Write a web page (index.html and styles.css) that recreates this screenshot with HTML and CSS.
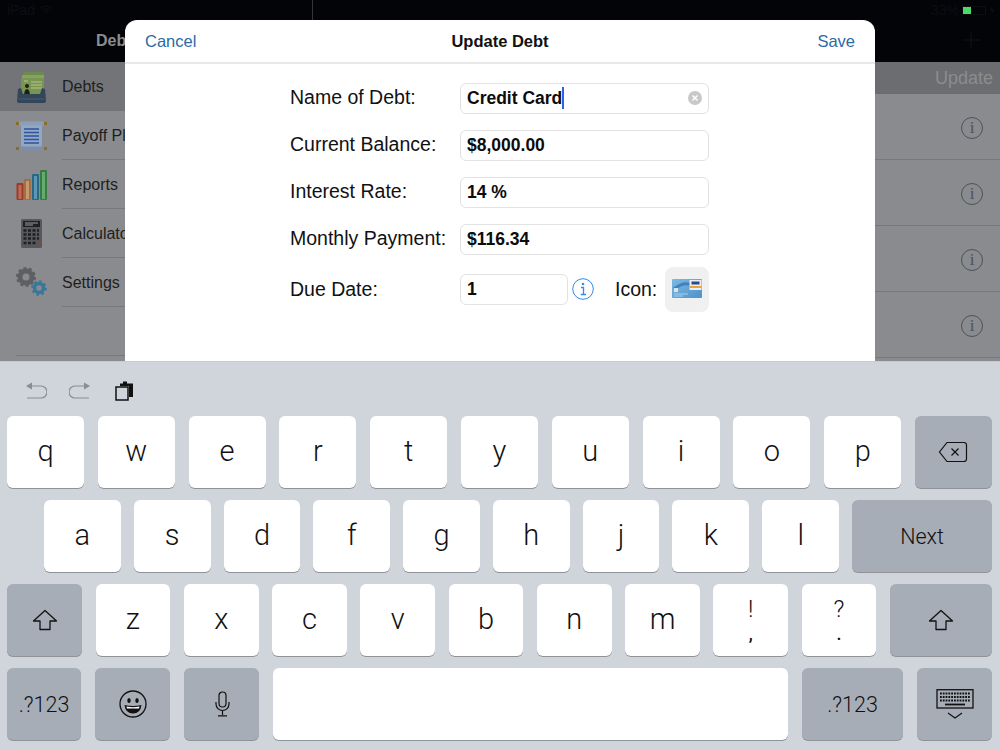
FILE: index.html
```html
<!DOCTYPE html>
<html lang="en">
<head>
<meta charset="utf-8">
<title>Update Debt</title>
<link rel="stylesheet" href="styles.css">
</head>
<body>
<div class="screen">
  <div class="app">
    <div class="topbar">
      <div class="status">
        <div class="status-left">
          <span>iPad</span>
          <svg class="wifi" viewBox="0 0 14 10"><path d="M1 3.500a8.500 8.500 0 0 1 12 0M3 5.600a5.600 5.600 0 0 1 8 0M5 7.600a2.800 2.800 0 0 1 4 0" fill="none" stroke="#0c0e12" stroke-width="1.200"/></svg>
        </div>
        <div class="status-divider"></div>
        <div class="status-right">
          <span>33%</span>
          <span class="battery"><span class="charge"></span></span>
          <svg class="bolt" viewBox="0 0 6 10"><path d="M3.500 0L0.500 5.500H3L2.500 10 5.500 4H3z" fill="#0c0e12"/></svg>
        </div>
      </div>
      <div class="navbar">
        <span class="nav-title">Debts</span>
        <svg class="plus" viewBox="0 0 18 18"><path d="M9 0v18M0 9h18" stroke="#101216" stroke-width="1"/></svg>
      </div>
    </div>
    <div class="columns">
      <nav class="sidebar">
        <div class="menu-row selected">
          <svg class="menu-icon" viewBox="0 0 31 32"><rect x="7" y="1" width="21" height="22" rx="1.500" fill="#6c8a4a"/><rect x="6" y="4" width="22" height="20" rx="1" fill="#86a262"/><rect x="5" y="7" width="23" height="18" rx="1" fill="#79954f"/><path d="M15 11h11M15 14h11M15 17h11M8 10h4" stroke="#b5c595" stroke-width="1.200"/><circle cx="11" cy="15" r="2" fill="#1c2018"/><path d="M8 24q.5-6 3-6t3 6z" fill="#1c2018"/><path d="M2 18l3-1 2 6h17l2-6 3 1 1 12a2 2 0 0 1-2 2H3a2 2 0 0 1-2-2z" fill="#334559"/><path d="M2.500 28h26" stroke="#4a5f78"/></svg>
          <span class="menu-label">Debts</span>
        </div>
        <div class="menu-row">
          <svg class="menu-icon" viewBox="0 0 31 32"><rect x="5" y="3" width="21" height="26" fill="#92a7c6"/><rect x="2.500" y="1.500" width="26" height="4" rx="1.500" fill="#8d9fb8"/><rect x="2.500" y="26.500" width="26" height="4" rx="1.500" fill="#7c8ea8"/><path d="M8 9h15M8 12.500h15M8 16h15M8 19.500h15M8 23h15" stroke="#30549a" stroke-width="1.300"/><rect x="0" y="2" width="3" height="3" fill="#8a6d2c"/><rect x="28" y="2" width="3" height="3" fill="#8a6d2c"/><rect x="0" y="27" width="3" height="3" fill="#8a6d2c"/><rect x="28" y="27" width="3" height="3" fill="#8a6d2c"/></svg>
          <span class="menu-label">Payoff Plan</span>
        </div>
        <div class="menu-row">
          <svg class="menu-icon" viewBox="0 0 31 32"><rect x="0.500" y="14" width="7" height="17" rx="1" fill="#9c3c28"/><rect x="2.500" y="16" width="3" height="14" fill="#bf6a55"/><rect x="8" y="10" width="7" height="21" rx="1" fill="#a06f45"/><rect x="10" y="12" width="3" height="18" fill="#c49a72"/><rect x="16" y="5" width="7" height="26" rx="1" fill="#2a6685"/><rect x="18" y="7" width="3" height="23" fill="#5f97b2"/><rect x="24" y="1" width="7" height="30" rx="1" fill="#377d43"/><rect x="26" y="3" width="3" height="27" fill="#67a96f"/></svg>
          <span class="menu-label">Reports</span>
        </div>
        <div class="menu-row">
          <svg class="menu-icon" viewBox="0 0 31 32"><rect x="5" y="1" width="21" height="29" rx="1.500" fill="#56585c"/><rect x="7" y="3" width="17" height="6" fill="#1f2022"/><path d="M9 5h13M9 7h8" stroke="#9a9c9e" stroke-width="1"/><path d="M7.500 12.500h3M12 12.500h3M16.500 12.500h3M21 12.500h2M7.500 16.500h3M12 16.500h3M16.500 16.500h3M21 16.500h2M7.500 20.500h3M12 20.500h3M16.500 20.500h3M21 20.500h2M7.500 25h3M12 25h3M16.500 25h3" stroke="#1e1f22" stroke-width="2.500"/><path d="M21 25h2" stroke="#a03a30" stroke-width="2.500"/></svg>
          <span class="menu-label">Calculator</span>
        </div>
        <div class="menu-row">
          <svg class="menu-icon" viewBox="0 0 31 32"><circle cx="10" cy="10" r="6" fill="none" stroke="#5d5f62" stroke-width="5"/><circle cx="10" cy="10" r="9" fill="none" stroke="#5d5f62" stroke-width="2" stroke-dasharray="3 2.650"/><circle cx="23" cy="21" r="4.500" fill="none" stroke="#37789a" stroke-width="3.500"/><circle cx="23" cy="21" r="6.800" fill="none" stroke="#37789a" stroke-width="2" stroke-dasharray="2.500 2.840"/></svg>
          <span class="menu-label">Settings</span>
        </div>
        <div class="menu-end"></div>
      </nav>
      <main class="list">
        <div class="list-head">Update</div>
        <div class="list-row"><span class="row-info">i</span></div>
        <div class="list-row"><span class="row-info">i</span></div>
        <div class="list-row"><span class="row-info">i</span></div>
        <div class="list-row"><span class="row-info">i</span></div>
      </main>
    </div>
  </div>

  <section class="modal">
    <header class="modal-head">
      <span class="link">Cancel</span>
      <span class="modal-title">Update Debt</span>
      <span class="link link-end">Save</span>
    </header>
    <form class="form">
      <label class="label">Name of Debt:</label>
      <div class="input">
        <span class="value">Credit Card</span><span class="caret"></span>
        <svg class="clear" viewBox="0 0 14 14"><circle cx="7" cy="7" r="7" fill="#c8c8c8"/><path d="M4.500 4.500l5 5M9.500 4.500l-5 5" stroke="#fff" stroke-width="1.500"/></svg>
      </div>
      <label class="label">Current Balance:</label>
      <div class="input"><span class="value">$8,000.00</span></div>
      <label class="label">Interest Rate:</label>
      <div class="input"><span class="value">14 %</span></div>
      <label class="label">Monthly Payment:</label>
      <div class="input"><span class="value">$116.34</span></div>
      <label class="label due-label">Due Date:</label>
      <div class="due-row">
        <div class="input due-input"><span class="value">1</span></div>
        <svg class="due-info" viewBox="0 0 22 22"><circle cx="11" cy="11" r="10.300" fill="none" stroke="#2f8cf0" stroke-width="1"/><circle cx="11" cy="6" r="1.300" fill="#2f8cf0"/><path d="M9 9.500h2.500v7M8.800 16.500h5.200" fill="none" stroke="#2f8cf0" stroke-width="1.300"/></svg>
        <span class="icon-label">Icon:</span>
        <div class="icon-button">
          <svg class="card" viewBox="0 0 30 20">
            <defs><linearGradient id="cardfill" x1="0" y1="0" x2="1" y2="1"><stop offset="0" stop-color="#7cb8e4"/><stop offset="1" stop-color="#4f93c9"/></linearGradient></defs>
            <rect width="30" height="19" rx="1" fill="url(#cardfill)"/><path d="M2 10q10-8 18-4" fill="none" stroke="#3f83bd" stroke-width="3"/><rect x="17.500" y="1" width="12" height="10" fill="#e8eef4"/><rect x="17.500" y="7" width="12" height="2" fill="#e8a23a"/><rect x="19.500" y="2.500" width="8" height="3" fill="#2a4a8c"/><rect x="2" y="9" width="4" height="4" fill="#d8e4ea"/><path d="M2 15h14M2 17h9" stroke="#a8d0ea"/></svg>
        </div>
      </div>
    </form>
  </section>

  <div class="keyboard">
    <div class="toolbar">
      <svg class="tool" viewBox="0 0 22 20"><path d="M7 1.500L1 5 7 8.500z" fill="#8a8c90"/><path d="M5 5h11a5.500 5.500 0 0 1 0 12H2" fill="none" stroke="#8a8c90" stroke-width="1.200"/></svg>
      <svg class="tool" viewBox="0 0 22 20"><path d="M15 1.500L21 5 15 8.500z" fill="#8a8c90"/><path d="M17 5H6a5.500 5.500 0 0 0 0 12h14" fill="none" stroke="#8a8c90" stroke-width="1.200"/></svg>
      <svg class="tool" viewBox="0 0 22 20"><path d="M7 5V2.500h3V0.500h4v2h6v13.500h-4V5z" fill="#111"/><rect x="3" y="6" width="12" height="13" fill="none" stroke="#111" stroke-width="1.500"/></svg>
    </div>
    <div class="keys">
      <div class="key-row row-one">
        <span class="key">q</span><span class="key">w</span><span class="key">e</span><span class="key">r</span><span class="key">t</span><span class="key">y</span><span class="key">u</span><span class="key">i</span><span class="key">o</span><span class="key">p</span>
        <span class="key dark">
          <svg class="key-icon backspace" viewBox="0 0 30 22"><path d="M9 1.500h17a2.500 2.500 0 0 1 2.500 2.500v14a2.500 2.500 0 0 1-2.500 2.500H9L1.500 11z" fill="none" stroke="#111" stroke-width="1.200"/><path d="M13.500 7.500l7 7M20.500 7.500l-7 7" stroke="#111" stroke-width="1.200"/></svg>
        </span>
      </div>
      <div class="key-row row-two">
        <span class="key">a</span><span class="key">s</span><span class="key">d</span><span class="key">f</span><span class="key">g</span><span class="key">h</span><span class="key">j</span><span class="key">k</span><span class="key">l</span>
        <span class="key dark next">Next</span>
      </div>
      <div class="key-row row-three">
        <span class="key dark shift-l">
          <svg class="key-icon shift" viewBox="0 0 26 22"><path d="M13 1.500L1.500 12H8v8.500h10V12h6.500z" fill="none" stroke="#111" stroke-width="1.300" stroke-linejoin="round"/></svg>
        </span>
        <span class="key">z</span><span class="key">x</span><span class="key">c</span><span class="key">v</span><span class="key">b</span><span class="key">n</span><span class="key">m</span>
        <span class="key stack"><span class="stack-top">!</span><span class="stack-bottom">,</span></span>
        <span class="key stack"><span class="stack-top">?</span><span class="stack-bottom">.</span></span>
        <span class="key dark shift-r">
          <svg class="key-icon shift" viewBox="0 0 26 22"><path d="M13 1.500L1.500 12H8v8.500h10V12h6.500z" fill="none" stroke="#111" stroke-width="1.300" stroke-linejoin="round"/></svg>
        </span>
      </div>
      <div class="key-row row-four">
        <span class="key dark mode w-a">.?123</span>
        <span class="key dark w-b">
          <svg class="key-icon emoji" viewBox="0 0 28 28"><circle cx="14" cy="14" r="13" fill="none" stroke="#111" stroke-width="1.300"/><ellipse cx="10" cy="10.500" rx="1.700" ry="2.500" fill="#111"/><ellipse cx="18" cy="10.500" rx="1.700" ry="2.500" fill="#111"/><path d="M5.500 15q8.500 2 17 0q-1 8.500-8.500 8.500T5.500 15z" fill="#111"/><path d="M7.500 16.500q6.500 1.300 13 0l-.5 2H8z" fill="#fff"/></svg>
        </span>
        <span class="key dark w-b">
          <svg class="key-icon mic" viewBox="0 0 16 26"><rect x="5" y="1" width="7" height="15" rx="3.500" fill="none" stroke="#111" stroke-width="1.200"/><path d="M2 11v2a6.500 6.500 0 0 0 13 0v-2M8.500 20v4M4 24.800h9" fill="none" stroke="#111" stroke-width="1.200"/></svg>
        </span>
        <span class="key space"></span>
        <span class="key dark mode w-c">.?123</span>
        <span class="key dark w-b hide">
          <svg class="key-icon hide-kb" viewBox="0 0 38 30"><rect x="1" y="0.700" width="36" height="18.300" fill="none" stroke="#111" stroke-width="1.300"/><path d="M4 4.500h30M4 8h30M4 11.500h30" stroke="#111" stroke-width="1.800" stroke-dasharray="1.800 1"/><path d="M9 15.500h20" stroke="#111" stroke-width="1.800"/><path d="M12 24l7 5 7-5" fill="none" stroke="#111" stroke-width="1.200"/></svg>
        </span>
      </div>
    </div>
  </div>
</div>
</body>
</html>
```
FILE: styles.css
```css
* { box-sizing: border-box; }

html, body {
  margin: 0;
  padding: 0;
}

body {
  width: 1000px;
  height: 750px;
  overflow: hidden;
  font-family: "Liberation Sans", Arial, sans-serif;
  color: #111;
}

.screen {
  position: relative;
  display: flex;
  flex-direction: column;
  width: 1000px;
  height: 750px;
  overflow: hidden;
}

/* dimmed app behind the sheet */
.app {
  display: flex;
  flex-direction: column;
  height: 361px;
  flex: none;
  background: #8a8b8f;
}

.topbar {
  height: 62px;
  background: #020408;
  flex: none;
}

.status {
  display: flex;
  height: 20px;
  font-size: 14px;
  line-height: 20px;
  color: #0c0e12;
}

.status-left {
  display: flex;
  align-items: center;
  gap: 4px;
  width: 312px;
  padding-left: 7px;
}

.wifi {
  width: 14px;
  height: 10px;
}

.status-divider {
  width: 1px;
  background: #33353a;
}

.status-right {
  flex: 1;
  display: flex;
  align-items: center;
  justify-content: flex-end;
  gap: 3px;
  padding-right: 5px;
}

.battery {
  display: flex;
  align-items: center;
  width: 24px;
  height: 9px;
  border: 1px solid #0c0e12;
}

.charge {
  width: 8px;
  height: 7px;
  background: #4cd964;
}

.bolt {
  width: 6px;
  height: 10px;
}

.navbar {
  display: flex;
  align-items: center;
  justify-content: space-between;
  height: 42px;
  padding: 0 20px 0 96px;
}

.nav-title {
  font-size: 16px;
  font-weight: bold;
  color: #8c8d90;
}

.plus {
  width: 18px;
  height: 18px;
  margin-top: -2px;
}

.columns {
  flex: 1;
  display: flex;
  min-height: 0;
}

.sidebar {
  width: 313px;
  flex: none;
  display: flex;
  flex-direction: column;
  border-right: 1px solid #77787c;
}

.menu-row {
  display: flex;
  align-items: center;
  flex: none;
  height: 49px;
  padding-left: 16px;
  gap: 15px;
}

.menu-row.selected {
  background: #737478;
}

.menu-icon {
  width: 31px;
  height: 32px;
  flex: none;
}

.menu-label {
  flex: 1;
  align-self: stretch;
  padding-top: 1px;
  font-size: 16px;
  line-height: 48px;
  color: #1e1f21;
  border-bottom: 1px solid #77787c;
}

.selected .menu-label {
  border-bottom: none;
}

.menu-end {
  flex: none;
  height: 49px;
  margin-left: 16px;
  border-bottom: 1px solid #77787c;
}

.list {
  flex: 1;
  display: flex;
  flex-direction: column;
}

.list-head {
  flex: none;
  height: 32px;
  padding-right: 7px;
  background: #6c6d70;
  color: #8b8c8f;
  font-size: 18px;
  line-height: 32px;
  text-align: right;
}

.list-row {
  display: flex;
  align-items: center;
  justify-content: flex-end;
  flex: none;
  height: 66px;
  padding: 2px 17px 0 0;
  border-bottom: 1px solid #77787c;
}

.row-info {
  display: flex;
  align-items: center;
  justify-content: center;
  width: 22px;
  height: 22px;
  border: 1px solid #505154;
  border-radius: 50%;
  color: #505154;
  font-family: "Liberation Serif", serif;
  font-size: 17px;
}

/* sheet */
.modal {
  position: absolute;
  left: 125px;
  top: 20px;
  width: 750px;
  height: 341px;
  background: #fff;
  border-radius: 12px 12px 0 0;
}

.modal-head {
  display: grid;
  grid-template-columns: 1fr auto 1fr;
  align-items: center;
  height: 44px;
  padding: 0 20px;
  border-bottom: 2px solid #e8e8e8;
}

.link {
  font-size: 16.500px;
  color: #2c6aa6;
}

.link-end {
  text-align: right;
}

.modal-title {
  font-size: 16.500px;
  font-weight: bold;
  color: #111;
}

.form {
  display: grid;
  grid-template-columns: 170px 249px;
  grid-auto-rows: 30px;
  row-gap: 17px;
  align-items: center;
  padding: 19px 0 0 165px;
}

.label {
  position: relative;
  top: -1px;
  font-size: 19.500px;
  color: #111;
  white-space: nowrap;
}

.input {
  display: flex;
  align-items: center;
  height: 31px;
  padding: 0 6px;
  background: #fff;
  border: 1px solid #e2e2e2;
  border-radius: 6px;
}

.value {
  font-size: 17.500px;
  font-weight: bold;
  color: #0c0c0c;
}

.caret {
  width: 2px;
  height: 22px;
  background: #2f62e8;
}

.clear {
  width: 14px;
  height: 14px;
  margin-left: auto;
}

.due-row {
  display: flex;
  align-items: center;
  height: 45px;
  margin-top: 6px;
}

.due-label {
  top: 0;
  margin-top: 6px;
}

.due-input {
  width: 108px;
}

.due-info {
  width: 22px;
  height: 22px;
  margin-left: 4px;
}

.icon-label {
  margin-left: 21px;
  font-size: 19.500px;
}

.icon-button {
  display: flex;
  align-items: center;
  justify-content: center;
  width: 44px;
  height: 45px;
  margin-left: auto;
  background: #f0f0f0;
  border-radius: 8px;
}

.card {
  width: 30px;
  height: 20px;
}

/* keyboard */
.keyboard {
  flex: 1;
  display: flex;
  flex-direction: column;
  background: #d0d4db;
  border-top: 1px solid #c8ccd2;
}

.toolbar {
  display: flex;
  align-items: center;
  gap: 22px;
  height: 54px;
  padding: 4px 0 0 25px;
  flex: none;
}

.tool {
  width: 22px;
  height: 20px;
}

.keys {
  display: flex;
  flex-direction: column;
  gap: 12px;
  padding: 0 8px 0 7px;
}

.key-row {
  display: flex;
  height: 72px;
}

.key {
  display: flex;
  align-items: center;
  justify-content: center;
  flex: 1 1 0;
  min-width: 0;
  padding-bottom: 3px;
  background: #fff;
  border-radius: 6px;
  box-shadow: 0 1px 0 #8f9298;
  font-family: Roboto, "Liberation Sans", sans-serif;
  font-weight: 300;
  font-size: 29px;
  color: #111;
}

.key.dark {
  padding-bottom: 0;
  background: #a7adb7;
  font-size: 21.500px;
  font-weight: 300;
}

.row-one { gap: 13.800px; }

.row-two {
  gap: 13px;
  padding-left: 37px;
}

.row-two .next {
  flex: 0 0 140px;
}

.row-three { gap: 13.600px; }

.row-three .shift-l { flex: 0 0 75px; }
.row-three .shift-r { flex: 0 0 102px; }

.row-four { gap: 14px; }

.w-a { flex: 0 0 74px; }
.w-b { flex: 0 0 75px; }
.w-c { flex: 0 0 101px; }
.space { flex: 1 1 0; }

.stack {
  flex-direction: column;
  justify-content: flex-start;
  padding-top: 11px;
}

.stack-top {
  font-size: 24px;
  line-height: 28px;
}

.stack-bottom {
  font-size: 18px;
  line-height: 21px;
  font-weight: 500;
}

.key-icon { display: block; }
.backspace { width: 30px; height: 22px; }
.shift { width: 26px; height: 22px; }
.emoji { width: 28px; height: 28px; }
.mic { width: 16px; height: 26px; }
.hide-kb { width: 38px; height: 30px; }
```
